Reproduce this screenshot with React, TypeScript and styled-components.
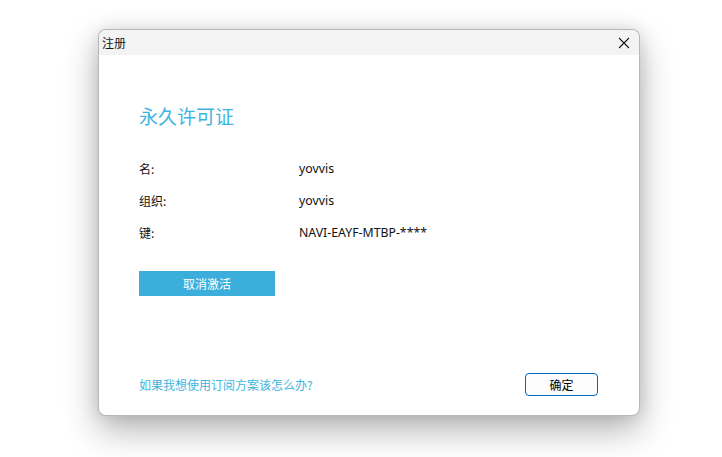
import React from "react";
import styled, { createGlobalStyle } from "styled-components";

const Global = createGlobalStyle`
  html, body { margin: 0; padding: 0; background: #ffffff; }
  body { font-family: "Segoe UI", "Noto Sans", "Noto Sans CJK SC", sans-serif; }
  #root { width: 722px; height: 457px; overflow: hidden; }
`;

const Page = styled.div`
  width: 722px;
  height: 457px;
  padding: 29px 0 0 98px;
  box-sizing: border-box;
  background: #ffffff;
`;

const Window = styled.div`
  width: 542px;
  height: 387px;
  box-sizing: border-box;
  border: 1px solid rgba(0, 0, 0, 0.28);
  border-radius: 8px;
  background: #ffffff;
  overflow: hidden;
  display: flex;
  flex-direction: column;
  box-shadow: 0 14px 34px rgba(0, 0, 0, 0.3), 0 0 16px rgba(0, 0, 0, 0.1);
`;

const TitleBar = styled.div`
  height: 25px;
  background: #f3f3f3;
  display: flex;
  align-items: center;
  justify-content: space-between;
  padding: 0 8px 0 3px;
  flex-shrink: 0;
`;

const TitleText = styled.span`
  font-family: "Noto Sans CJK SC", sans-serif;
  font-size: 12px;
  color: #1a1a1a;
`;

const CloseButton = styled.button`
  border: none;
  background: transparent;
  padding: 0;
  width: 14px;
  height: 14px;
  display: flex;
  align-items: center;
  justify-content: center;
  margin-top: 1px;
`;

const Body = styled.div`
  flex: 1;
  display: flex;
  flex-direction: column;
  padding: 48px 40px 19px 40px;
`;

const Heading = styled.h1`
  margin: 0;
  font-family: "Noto Sans CJK SC", sans-serif;
  font-weight: 400;
  font-size: 19px;
  line-height: 26px;
  color: #3eb4e0;
`;

const InfoList = styled.div`
  margin-top: 23px;
  display: flex;
  flex-direction: column;
`;

const InfoRow = styled.div`
  display: grid;
  grid-template-columns: 160px 1fr;
  height: 32px;
  align-items: center;
  font-size: 12px;
  color: #111;
`;

const Label = styled.span`
  font-family: "Noto Sans CJK SC", sans-serif;
`;

const Value = styled.span`
  font-family: "Segoe UI", "Noto Sans", "Noto Sans CJK SC", sans-serif;
  font-size: 12.3px;
`;

const PrimaryButton = styled.button`
  margin-top: 23px;
  width: 136px;
  height: 25px;
  border: none;
  background: #3baedb;
  color: #ffffff;
  font-family: "Noto Sans CJK SC", sans-serif;
  font-size: 12px;
  padding: 0;
  cursor: pointer;
`;

const Footer = styled.div`
  margin-top: auto;
  display: flex;
  align-items: center;
  justify-content: space-between;
`;

const HelpLink = styled.a`
  font-family: "Noto Sans CJK SC", sans-serif;
  font-size: 12px;
  color: #3eb4e0;
  text-decoration: none;
  cursor: pointer;
`;

const OkButton = styled.button`
  width: 73px;
  height: 23px;
  box-sizing: border-box;
  border: 1px solid #0067c0;
  border-radius: 4px;
  background: #fdfdfd;
  color: #000;
  font-family: "Noto Sans CJK SC", sans-serif;
  font-size: 12px;
  padding: 0;
  margin-right: 1px;
`;

const rows = [
  { label: "名:", value: "yovvis" },
  { label: "组织:", value: "yovvis" },
  { label: "键:", value: "NAVI-EAYF-MTBP-****" },
];

export default function App() {
  return (
    <>
      <Global />
      <Page>
        <Window>
          <TitleBar>
            <TitleText>注册</TitleText>
            <CloseButton aria-label="close">
              <svg width="12" height="12" viewBox="0 0 12 12">
                <path d="M1 1 L11 11 M11 1 L1 11" stroke="#1a1a1a" strokeWidth="1.1" fill="none" />
              </svg>
            </CloseButton>
          </TitleBar>
          <Body>
            <Heading>永久许可证</Heading>
            <InfoList>
              {rows.map((r) => (
                <InfoRow key={r.label}>
                  <Label>{r.label}</Label>
                  <Value>{r.value}</Value>
                </InfoRow>
              ))}
            </InfoList>
            <PrimaryButton>取消激活</PrimaryButton>
            <Footer>
              <HelpLink>如果我想使用订阅方案该怎么办?</HelpLink>
              <OkButton>确定</OkButton>
            </Footer>
          </Body>
        </Window>
      </Page>
    </>
  );
}
